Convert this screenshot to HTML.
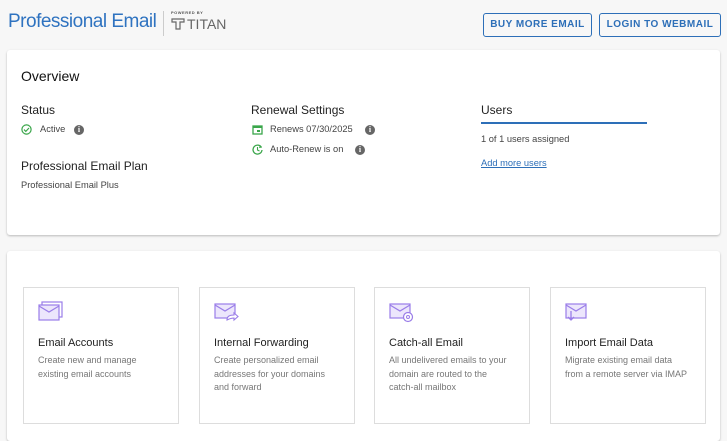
<!DOCTYPE html>
<html><head><style>
*{box-sizing:border-box;margin:0;padding:0}
body{width:727px;height:431px;overflow:hidden;background:#f7f7f7;font-family:"Liberation Sans",sans-serif;color:#333;position:relative}
.abs{position:absolute}
.title{left:8px;top:11px;font-size:19px;color:#2f73c0;letter-spacing:-0.5px}
.sep{left:163px;top:11px;width:1px;height:25px;background:#ccc}
.btn{top:13px;height:24px;border:1px solid #2d6fb8;border-radius:3px;color:#2d6fb8;font-size:10px;font-weight:bold;letter-spacing:0.5px;text-align:center;line-height:22px}
.card{background:#fff;border-radius:3px;box-shadow:0 1px 2px rgba(0,0,0,.25)}
.h{font-size:12px;color:#222}
.s{font-size:9.3px;color:#444}
.info{display:inline-block;width:10px;height:10px;border-radius:50%;background:#666;color:#fff;font-size:8px;font-weight:bold;text-align:center;line-height:10px;font-family:"Liberation Serif",serif}
.tile{top:287px;width:156px;height:137px;border:1px solid #ddd;background:#fff}
.tile .t{position:absolute;left:14px;top:49px;font-size:11px;color:#222}
.tile .d{position:absolute;left:14px;top:66px;font-size:9px;color:#777;line-height:13.5px;width:123px}
.tile svg{position:absolute;left:14px;top:13px}
</style></head><body>
<div class="abs title">Professional Email</div>
<div class="abs sep"></div>
<div class="abs" style="left:171px;top:10px;font-size:4px;font-weight:bold;color:#555;letter-spacing:.5px">POWERED BY</div>
<svg class="abs" style="left:171px;top:17px" width="14" height="14" viewBox="0 0 14 14"><path d="M1 2h12v3H9v7H5V5H1z" fill="none" stroke="#666" stroke-width="1.2"/></svg>
<div class="abs" style="left:187px;top:16px;font-size:14px;color:#666">TITAN</div>
<div class="abs btn" style="left:483px;width:109px">BUY MORE EMAIL</div>
<div class="abs btn" style="left:599px;width:122px">LOGIN TO WEBMAIL</div>

<div class="abs card" style="left:7px;top:50px;width:713px;height:185px"></div>
<div class="abs" style="left:21px;top:68px;font-size:14px;color:#111">Overview</div>
<div class="abs h" style="left:21px;top:103px">Status</div>
<svg class="abs" style="left:21px;top:124px" width="11" height="11"><circle cx="5.5" cy="5.5" r="4.6" fill="none" stroke="#3aa64a" stroke-width="1.2"/><path d="M3 5.6l1.8 1.8 3.2-3.4" fill="none" stroke="#3aa64a" stroke-width="1.2"/></svg>
<div class="abs s" style="left:40px;top:124px">Active</div>
<span class="abs info" style="left:74px;top:125px">i</span>
<div class="abs h" style="left:21px;top:159px">Professional Email Plan</div>
<div class="abs s" style="left:21px;top:180px">Professional Email Plus</div>

<div class="abs h" style="left:251px;top:103px">Renewal Settings</div>
<svg class="abs" style="left:252px;top:124px" width="11" height="11"><rect x="1" y="2" width="9" height="8" fill="none" stroke="#3aa64a" stroke-width="1.3"/><rect x="1" y="2" width="9" height="2" fill="#3aa64a"/><rect x="5" y="6" width="3" height="2" fill="#3aa64a"/></svg>
<div class="abs s" style="left:270px;top:124px">Renews 07/30/2025</div>
<span class="abs info" style="left:365px;top:125px">i</span>
<svg class="abs" style="left:252px;top:144px" width="11" height="11"><path d="M9.5 3.5A4.5 4.5 0 1 0 10 6" fill="none" stroke="#3aa64a" stroke-width="1.3"/><path d="M5.5 3v3l2 1" fill="none" stroke="#3aa64a" stroke-width="1.1"/><path d="M8 1l2 2.5L7 4z" fill="#3aa64a"/></svg>
<div class="abs s" style="left:270px;top:144px">Auto-Renew is on</div>
<span class="abs info" style="left:355px;top:145px">i</span>

<div class="abs h" style="left:481px;top:103px">Users</div>
<div class="abs" style="left:481px;top:122px;width:166px;height:2px;background:#2d6fb8"></div>
<div class="abs s" style="left:481px;top:134px">1 of 1 users assigned</div>
<div class="abs s" style="left:481px;top:158px;color:#2d6fb8;text-decoration:underline">Add more users</div>

<div class="abs card" style="left:7px;top:251px;width:713px;height:190px"></div>
<div class="abs tile" style="left:23px"><svg width="26" height="22"><rect x="4" y="1" width="20" height="15" fill="none" stroke="#9a7de8" stroke-width="1.2"/><rect x="1" y="4" width="20" height="15" fill="#ece6fc" stroke="#9a7de8" stroke-width="1.2"/><path d="M1 5l10 6 10-6" fill="none" stroke="#9a7de8" stroke-width="1.2"/></svg><div class="t">Email Accounts</div><div class="d">Create new and manage existing email accounts</div></div>
<div class="abs tile" style="left:199px"><svg width="26" height="22"><rect x="1" y="3" width="20" height="14" fill="#ece6fc" stroke="#9a7de8" stroke-width="1.2"/><path d="M1 4l10 6 10-6" fill="none" stroke="#9a7de8" stroke-width="1.2"/><path d="M13 19c0-4 3-5 7-5v-2l4 3.5-4 3.5v-2c-3 0-5 1-7 2z" fill="#fff" stroke="#9a7de8" stroke-width="1.1"/></svg><div class="t">Internal Forwarding</div><div class="d">Create personalized email addresses for your domains and forward</div></div>
<div class="abs tile" style="left:374px"><svg width="26" height="22"><rect x="1" y="3" width="20" height="14" fill="#ece6fc" stroke="#9a7de8" stroke-width="1.2"/><path d="M1 4l10 6 10-6" fill="none" stroke="#9a7de8" stroke-width="1.2"/><circle cx="19" cy="16" r="4.5" fill="#fff" stroke="#9a7de8" stroke-width="1.2"/><circle cx="19" cy="16" r="1.5" fill="none" stroke="#9a7de8"/></svg><div class="t">Catch-all Email</div><div class="d">All undelivered emails to your domain are routed to the catch-all mailbox</div></div>
<div class="abs tile" style="left:550px"><svg width="26" height="22"><rect x="1" y="3" width="20" height="14" fill="#ece6fc" stroke="#9a7de8" stroke-width="1.2"/><path d="M1 4l10 6 10-6" fill="none" stroke="#9a7de8" stroke-width="1.2"/><path d="M6 10v9M3 16l3 3 3-3" fill="none" stroke="#9a7de8" stroke-width="1.3"/></svg><div class="t">Import Email Data</div><div class="d">Migrate existing email data from a remote server via IMAP</div></div>
</body></html>
